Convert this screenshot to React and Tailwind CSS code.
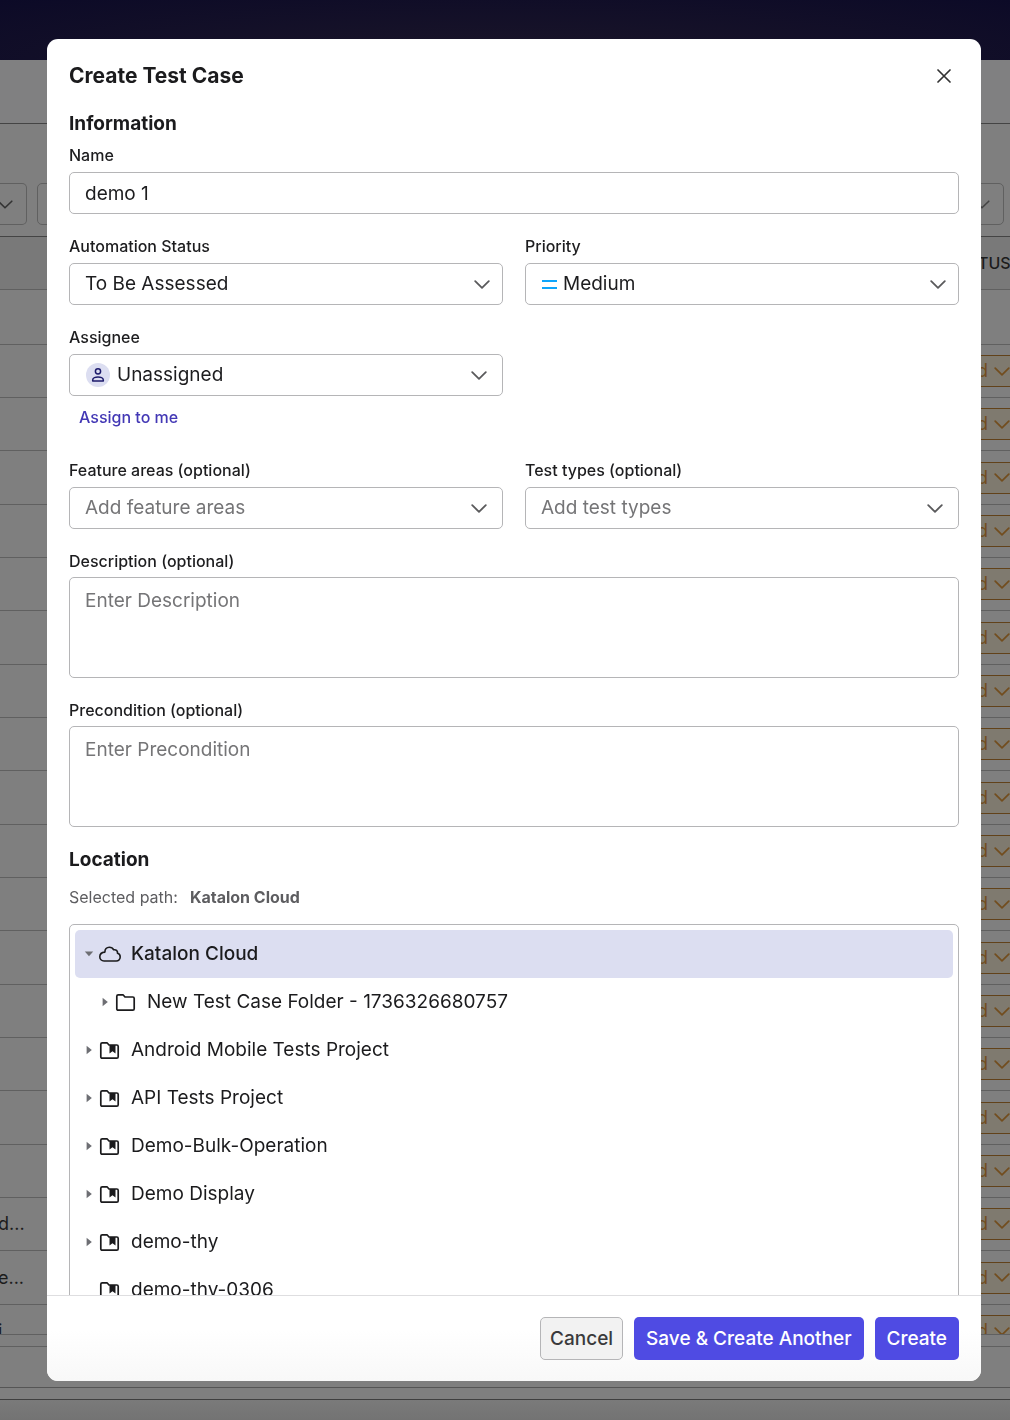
import React from "react";

const chevronPath = "M1.2 1.2 8 7.8l6.8-6.6";

function Chevron({ className = "", strokeWidth = 1.6 }) {
  return (
    <svg viewBox="0 0 16 9" aria-hidden="true" className={"h-[9px] w-4 shrink-0 " + className} fill="none" stroke="currentColor" strokeWidth={strokeWidth} strokeLinecap="round" strokeLinejoin="round">
      <path d={chevronPath} />
    </svg>
  );
}

function PriorityIcon() {
  return (
    <svg viewBox="0 0 16 9" aria-hidden="true" className="h-[9px] w-4" fill="#0ea5fb">
      <rect x="1" width="15" height="2" />
      <rect x="1" y="7" width="15" height="2" />
    </svg>
  );
}

function PersonIcon() {
  return (
    <span className="ml-px flex size-6 items-center justify-center rounded-full bg-[#dcdef1]">
      <svg viewBox="0 0 14 16" aria-hidden="true" className="h-4 w-3.5" fill="none" stroke="#1c1a6b" strokeWidth="1.5">
        <circle cx="7" cy="4.3" r="2.6" />
        <path d="M1.7 14v-1.100c0-1.900 2.900-2.900 5.300-2.900s5.300 1 5.300 2.900v1.100z" strokeLinejoin="round" />
      </svg>
    </span>
  );
}

function CloudIcon() {
  return (
    <svg viewBox="0 0 22 16" aria-hidden="true" className="h-4 w-[22px]" fill="none" stroke="#1b1b1d" strokeWidth="1.6" strokeLinejoin="round">
      <path d="M5 15h12.200c2.300 0 4-1.700 4-3.900 0-2-1.100-3.500-2.700-3.800.3-2.400-1.600-4-3.800-3.500C13.900 2.100 12.200 1.200 10.300 1.200 7.600 1.200 5.800 3.200 5.900 6.100 3 6.300.800 8.200.800 10.800.800 13.200 2.600 15 5 15z" />
    </svg>
  );
}

function FolderIcon({ marked }) {
  return (
    <svg viewBox="0.5 -0.6 20 18" aria-hidden="true" className="h-[18px] w-5 overflow-visible" fill="none" stroke="#1b1b1d" strokeWidth="1.7" strokeLinejoin="round">
      <path d="M2.700 1.200h4.800l2 2.200h7.800c.8 0 1.400.6 1.400 1.400v10.400c0 .8-.6 1.400-1.400 1.400H2.700c-.8 0-1.400-.6-1.400-1.400V2.600c0-.8.6-1.400 1.400-1.400z" />
      {marked && <path d="M10 3.500h6v8.300l-3-2.200-3 2.200z" fill="#1b1b1d" stroke="none" />}
    </svg>
  );
}

function Caret({ open }) {
  return (
    <svg viewBox="0 0 10 10" aria-hidden="true" className="size-2.5" fill="#6d6e73">
      {open ? <path d="M.8 2.500h8.400L5 7.300z" /> : <path d="M2.600.8v8.400L7.800 5z" />}
    </svg>
  );
}

const fieldClass = "block w-full rounded-[5px] border border-[#b5b5b7] bg-white px-[15px] text-[19px] leading-6 text-[#1d1d1f] placeholder:text-[#757577] placeholder:opacity-100 outline-none";
const labelClass = "text-base leading-5 font-medium text-[#1d1d1f]";

function SelectField({ id, label, value, icon, iconPad = "", muted, chevronPad = "right-[13px]", children }) {
  return (
    <div className="flex min-w-0 flex-col gap-[7px]">
      <label htmlFor={id} className={labelClass}>{label}</label>
      <div className="relative">
        {icon && <span className="pointer-events-none absolute inset-y-0 left-4 flex items-center">{icon}</span>}
        <select id={id} defaultValue={value} className={fieldClass + " h-[42px] appearance-none " + iconPad + (muted ? " text-[#757577]" : "")}>
          <option>{value}</option>
        </select>
        <span className={"pointer-events-none absolute inset-y-0 flex items-center text-[#5a5a5c] " + chevronPad}>
          <Chevron strokeWidth={1.8} />
        </span>
      </div>
      {children}
    </div>
  );
}

function TextAreaField({ id, label, placeholder }) {
  return (
    <div className="flex flex-col gap-1.5">
      <label htmlFor={id} className={labelClass}>{label}</label>
      <textarea id={id} placeholder={placeholder} className={fieldClass + " h-[101px] resize-none py-[11px]"} />
    </div>
  );
}

const projects = ["Android Mobile Tests Project", "API Tests Project", "Demo-Bulk-Operation", "Demo Display", "demo-thy", "demo-thy-0306"];

function TreeRow({ label, icon, open, leaf, selected, nested }) {
  return (
    <li className={"flex h-12 shrink-0 items-center rounded-[5px] " + (selected ? "bg-[#dcdef1] " : "") + (nested ? "pl-[25px]" : "pl-[9px]")}>
      <button type="button" className="flex items-center text-[19px] leading-6 text-[#1b1b1d]">
        <span className="mr-[5px] size-2.5">{!leaf && <Caret open={open} />}</span>
        <span className={"mr-2.5 flex w-[22px] " + (selected ? "" : "pl-px")}>{icon}</span>
        <span className={selected ? "font-medium" : ""}>{label}</span>
      </button>
    </li>
  );
}

const rows = Array.from({ length: 20 }, (_, i) => i);
const rowText = { 17: "d...", 18: "e...", 19: "i..." };

function BackgroundPage() {
  return (
    <div className="flex h-screen flex-col overflow-hidden bg-[#7f7f7f] text-[#1c1c1c]">
      <div className="h-[60px] shrink-0 bg-[radial-gradient(ellipse_at_bottom,#1b1629,#0c0a27)]" />
      <div className="h-16 shrink-0 border-b border-[#444] bg-[#808081]" />
      <div className="flex h-[113px] shrink-0 items-end justify-between border-b border-[#444] pr-1.5 pb-[11px]">
        <div className="flex gap-2.5">
          <button type="button" aria-label="Filter" className="flex h-[42px] w-[27px] items-center rounded-r-[5px] border border-l-0 border-[#606060] text-[#333]"><span className="-ml-[3px]"><Chevron /></span></button>
          <button type="button" aria-label="Filter" className="h-[42px] w-24 rounded-[5px] border border-[#606060]" />
        </div>
        <button type="button" aria-label="More filters" className="flex h-[42px] w-24 items-center justify-end rounded-[5px] border border-[#606060] pr-[13px] text-[#444]"><Chevron /></button>
      </div>
      <div className="min-h-0 flex-1 overflow-hidden border-b border-[#606060]">
        <table className="w-full table-fixed border-separate border-spacing-0 text-left">
          <thead>
            <tr className="h-[53px] bg-[#797979]">
              <th className="border-b border-[#606060] p-0" />
              <th className="w-8 overflow-hidden border-b border-[#606060] p-0 text-base font-medium">TUS</th>
            </tr>
          </thead>
          <tbody>
            {rows.map((i) => (
              <tr key={i} className={i === 0 ? "h-[55px]" : i % 3 === 0 ? "h-[54px]" : "h-[53px]"}>
                <td className="border-b border-[#606060] p-0 text-lg leading-6"><span className="-ml-0.5">{rowText[i]}</span></td>
                <td className="overflow-hidden border-b border-[#606060] p-0">
                  {i > 0 && (
                    <button type="button" className="-ml-px flex h-8 w-16 items-center gap-1.5 border-y border-[#62421a] bg-[#7f7a6f] text-lg text-[#724d1e]">
                      d<Chevron strokeWidth={1.7} />
                    </button>
                  )}
                </td>
              </tr>
            ))}
          </tbody>
        </table>
      </div>
      <div className="h-3 shrink-0 border-b border-[#606060]" />
      <div className="h-[41px] shrink-0 border-b border-[#555]" />
      <div className="h-3 shrink-0 border-b border-[#3f3f3f]" />
      <div className="h-5 shrink-0 bg-gradient-to-b from-[#7a7a7a] to-[#737373]" />
    </div>
  );
}

export default function App() {
  return (
    <div className="relative font-['Inter',sans-serif]">
      <BackgroundPage />
      <div className="fixed inset-0 flex py-[39px] pr-[29px] pl-[47px]">
        <div role="dialog" aria-labelledby="dialog-title" className="flex min-w-0 flex-1 flex-col overflow-hidden rounded-[11px] bg-white">
          <header className="flex h-[73px] shrink-0 items-center justify-between pt-px pr-[27px] pl-[22px]">
            <h1 id="dialog-title" className="text-[21px] leading-7 font-bold text-[#1b1b1d]">Create Test Case</h1>
            <button type="button" aria-label="Close" className="flex size-5 items-center justify-center">
              <svg viewBox="0 0 14 14" aria-hidden="true" className="size-3.5" stroke="#333" strokeWidth="1.7" strokeLinecap="round">
                <path d="M1 1l12 12M13 1 1 13" />
              </svg>
            </button>
          </header>
          <div className="flex min-h-0 flex-1 flex-col overflow-hidden px-[22px]">
            <h2 className="shrink-0 pb-[9px] text-[19px] leading-6 font-bold text-[#1b1b1d]">Information</h2>
            <div className="flex shrink-0 flex-col gap-[22px]">
              <div className="flex flex-col gap-[7px]">
                <label htmlFor="name" className={labelClass}>Name</label>
                <input id="name" type="text" defaultValue="demo 1" className={fieldClass + " h-[42px]"} />
              </div>
              <div className="grid grid-cols-2 gap-[22px]">
                <SelectField id="status" label="Automation Status" value="To Be Assessed" />
                <SelectField id="priority" label="Priority" value="Medium" icon={<PriorityIcon />} iconPad="pl-[37px]" />
              </div>
              <div className="grid grid-cols-2 gap-[22px]">
                <SelectField id="assignee" label="Assignee" value="Unassigned" icon={<PersonIcon />} iconPad="pl-[47px]" chevronPad="right-4">
                  <button type="button" className="mt-1 mb-[11px] ml-2.5 self-start text-base leading-5 font-medium text-[#4338b5]">Assign to me</button>
                </SelectField>
              </div>
              <div className="grid grid-cols-2 gap-[22px]">
                <SelectField id="areas" label="Feature areas (optional)" value="Add feature areas" muted chevronPad="right-4" />
                <SelectField id="types" label="Test types (optional)" value="Add test types" muted chevronPad="right-4" />
              </div>
              <TextAreaField id="description" label="Description (optional)" placeholder="Enter Description" />
              <TextAreaField id="precondition" label="Precondition (optional)" placeholder="Enter Precondition" />
            </div>
            <h2 className="shrink-0 pt-[21px] text-[19px] leading-6 font-bold text-[#1b1b1d]">Location</h2>
            <p className="flex shrink-0 gap-3 pt-[15px] pb-[17px] text-base leading-5 text-[#5d5d60]">
              Selected path: <strong className="font-bold">Katalon Cloud</strong>
            </p>
            <ul className="shrink-0 rounded-[5px] border border-[#b5b5b7] p-[5px]">
              <TreeRow label="Katalon Cloud" icon={<CloudIcon />} open selected />
              <TreeRow label="New Test Case Folder - 1736326680757" icon={<FolderIcon />} nested />
              {projects.map((p) => (
                <TreeRow key={p} label={p} icon={<FolderIcon marked />} leaf={p === "demo-thy-0306"} />
              ))}
            </ul>
          </div>
          <footer className="flex h-[86px] shrink-0 items-center justify-end gap-[11px] border-t border-[#dedee0] bg-gradient-to-b from-white from-40% to-[#f8f8f8] px-[22px]">
            <button type="button" className="h-[43px] rounded-[5px] border border-[#b5b5b7] bg-[#f2f2f2] px-[9px] pt-px text-[19px] font-medium text-[#3a3a3c]">Cancel</button>
            <button type="button" className="h-[43px] rounded-[5px] bg-[#4f4be3] px-3 pt-px text-[19px] font-medium text-white">Save &amp; Create Another</button>
            <button type="button" className="h-[43px] rounded-[5px] bg-[#4f4be3] px-3 pt-px text-[19px] font-medium text-white">Create</button>
          </footer>
        </div>
      </div>
    </div>
  );
}
